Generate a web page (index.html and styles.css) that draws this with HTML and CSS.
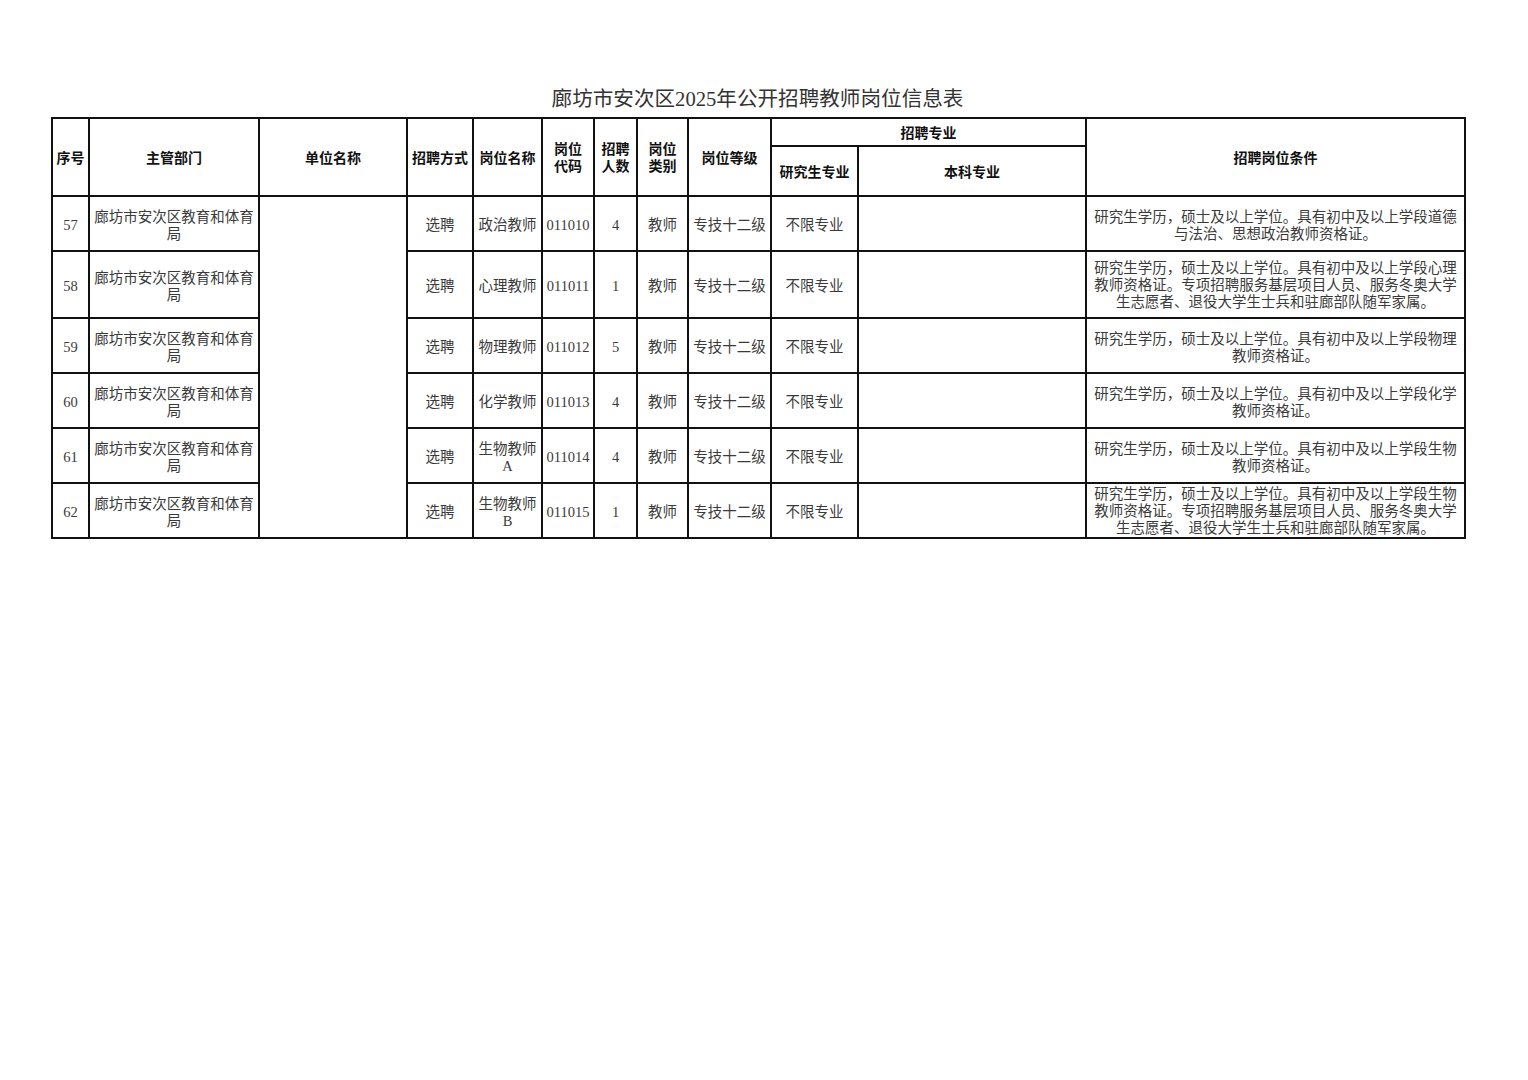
FILE: index.html
```html
<!DOCTYPE html>
<html lang="zh-CN">
<head>
<meta charset="utf-8">
<title>廊坊市安次区2025年公开招聘教师岗位信息表</title>
<link rel="stylesheet" href="styles.css">
</head>
<body>
<div class="page">
  <div class="title">廊坊市安次区2025年公开招聘教师岗位信息表</div>
  <table class="grid">
    <colgroup>
      <col class="c1"><col class="c2"><col class="c3"><col class="c4"><col class="c5"><col class="c6">
      <col class="c7"><col class="c8"><col class="c9"><col class="c10"><col class="c11"><col class="c12">
    </colgroup>
    <thead>
      <tr class="h1">
        <th rowspan="2">序号</th>
        <th rowspan="2">主管部门</th>
        <th rowspan="2">单位名称</th>
        <th rowspan="2">招聘方式</th>
        <th rowspan="2">岗位名称</th>
        <th rowspan="2">岗位<br>代码</th>
        <th rowspan="2">招聘<br>人数</th>
        <th rowspan="2">岗位<br>类别</th>
        <th rowspan="2">岗位等级</th>
        <th colspan="2">招聘专业</th>
        <th rowspan="2">招聘岗位条件</th>
      </tr>
      <tr class="h2">
        <th>研究生专业</th>
        <th>本科专业</th>
      </tr>
    </thead>
    <tbody>
      <tr class="r">
        <td>57</td>
        <td>廊坊市安次区教育和体育<br>局</td>
        <td rowspan="6"></td>
        <td>选聘</td>
        <td>政治教师</td>
        <td>011010</td>
        <td>4</td>
        <td>教师</td>
        <td>专技十二级</td>
        <td>不限专业</td>
        <td></td>
        <td class="cond">研究生学历，硕士及以上学位。具有初中及以上学段道德<br>与法治、思想政治教师资格证。</td>
      </tr>
      <tr class="r tall">
        <td>58</td>
        <td>廊坊市安次区教育和体育<br>局</td>
        <td>选聘</td>
        <td>心理教师</td>
        <td>011011</td>
        <td>1</td>
        <td>教师</td>
        <td>专技十二级</td>
        <td>不限专业</td>
        <td></td>
        <td class="cond three">研究生学历，硕士及以上学位。具有初中及以上学段心理<br>教师资格证。专项招聘服务基层项目人员、服务冬奥大学<br>生志愿者、退役大学生士兵和驻廊部队随军家属。</td>
      </tr>
      <tr class="r">
        <td>59</td>
        <td>廊坊市安次区教育和体育<br>局</td>
        <td>选聘</td>
        <td>物理教师</td>
        <td>011012</td>
        <td>5</td>
        <td>教师</td>
        <td>专技十二级</td>
        <td>不限专业</td>
        <td></td>
        <td class="cond">研究生学历，硕士及以上学位。具有初中及以上学段物理<br>教师资格证。</td>
      </tr>
      <tr class="r">
        <td>60</td>
        <td>廊坊市安次区教育和体育<br>局</td>
        <td>选聘</td>
        <td>化学教师</td>
        <td>011013</td>
        <td>4</td>
        <td>教师</td>
        <td>专技十二级</td>
        <td>不限专业</td>
        <td></td>
        <td class="cond">研究生学历，硕士及以上学位。具有初中及以上学段化学<br>教师资格证。</td>
      </tr>
      <tr class="r">
        <td>61</td>
        <td>廊坊市安次区教育和体育<br>局</td>
        <td>选聘</td>
        <td>生物教师<br>A</td>
        <td>011014</td>
        <td>4</td>
        <td>教师</td>
        <td>专技十二级</td>
        <td>不限专业</td>
        <td></td>
        <td class="cond">研究生学历，硕士及以上学位。具有初中及以上学段生物<br>教师资格证。</td>
      </tr>
      <tr class="r">
        <td>62</td>
        <td>廊坊市安次区教育和体育<br>局</td>
        <td>选聘</td>
        <td>生物教师<br>B</td>
        <td>011015</td>
        <td>1</td>
        <td>教师</td>
        <td>专技十二级</td>
        <td>不限专业</td>
        <td></td>
        <td class="cond three">研究生学历，硕士及以上学位。具有初中及以上学段生物<br>教师资格证。专项招聘服务基层项目人员、服务冬奥大学<br>生志愿者、退役大学生士兵和驻廊部队随军家属。</td>
      </tr>
    </tbody>
  </table>
</div>
</body>
</html>
```

FILE: styles.css
```css
html, body {
  margin: 0;
  padding: 0;
  background: #ffffff;
}

.page {
  padding: 84px 0 0 51px;
  width: 1413px;
}

.title {
  height: 30px;
  line-height: 30px;
  margin-bottom: 3px;
  text-align: center;
  font-family: "Liberation Serif", "Noto Sans CJK SC", serif;
  font-size: 20.6px;
  color: #333333;
}

.grid {
  border-collapse: collapse;
  table-layout: fixed;
  width: 1413px;
  border: 2px solid #111111;
}

.grid th,
.grid td {
  border: 2px solid #111111;
  padding: 0 3px;
  text-align: center;
  vertical-align: middle;
  overflow: hidden;
}

.grid th {
  font-family: "Noto Sans CJK SC", "Noto Sans", sans-serif;
  font-weight: bold;
  font-size: 14px;
  line-height: 17px;
  color: #111111;
}

.grid td {
  padding-top: 4px;
  font-family: "Liberation Serif", "Noto Sans CJK SC", serif;
  font-size: 14.5px;
  line-height: 17px;
  color: #3a3a3a;
}

.c1 { width: 37px; }
.c2 { width: 170px; }
.c3 { width: 148px; }
.c4 { width: 66px; }
.c5 { width: 69px; }
.c6 { width: 52px; }
.c7 { width: 43px; }
.c8 { width: 51px; }
.c9 { width: 83px; }
.c10 { width: 87px; }
.c11 { width: 228px; }
.c12 { width: 379px; }

.h1 { height: 28px; }
.h2 { height: 50px; }
.r { height: 55px; }
.r.tall { height: 67px; }

.grid td.cond {
  padding-left: 4px;
  padding-right: 4px;
}

.grid td.cond.three {
  padding-top: 1px;
}
```
